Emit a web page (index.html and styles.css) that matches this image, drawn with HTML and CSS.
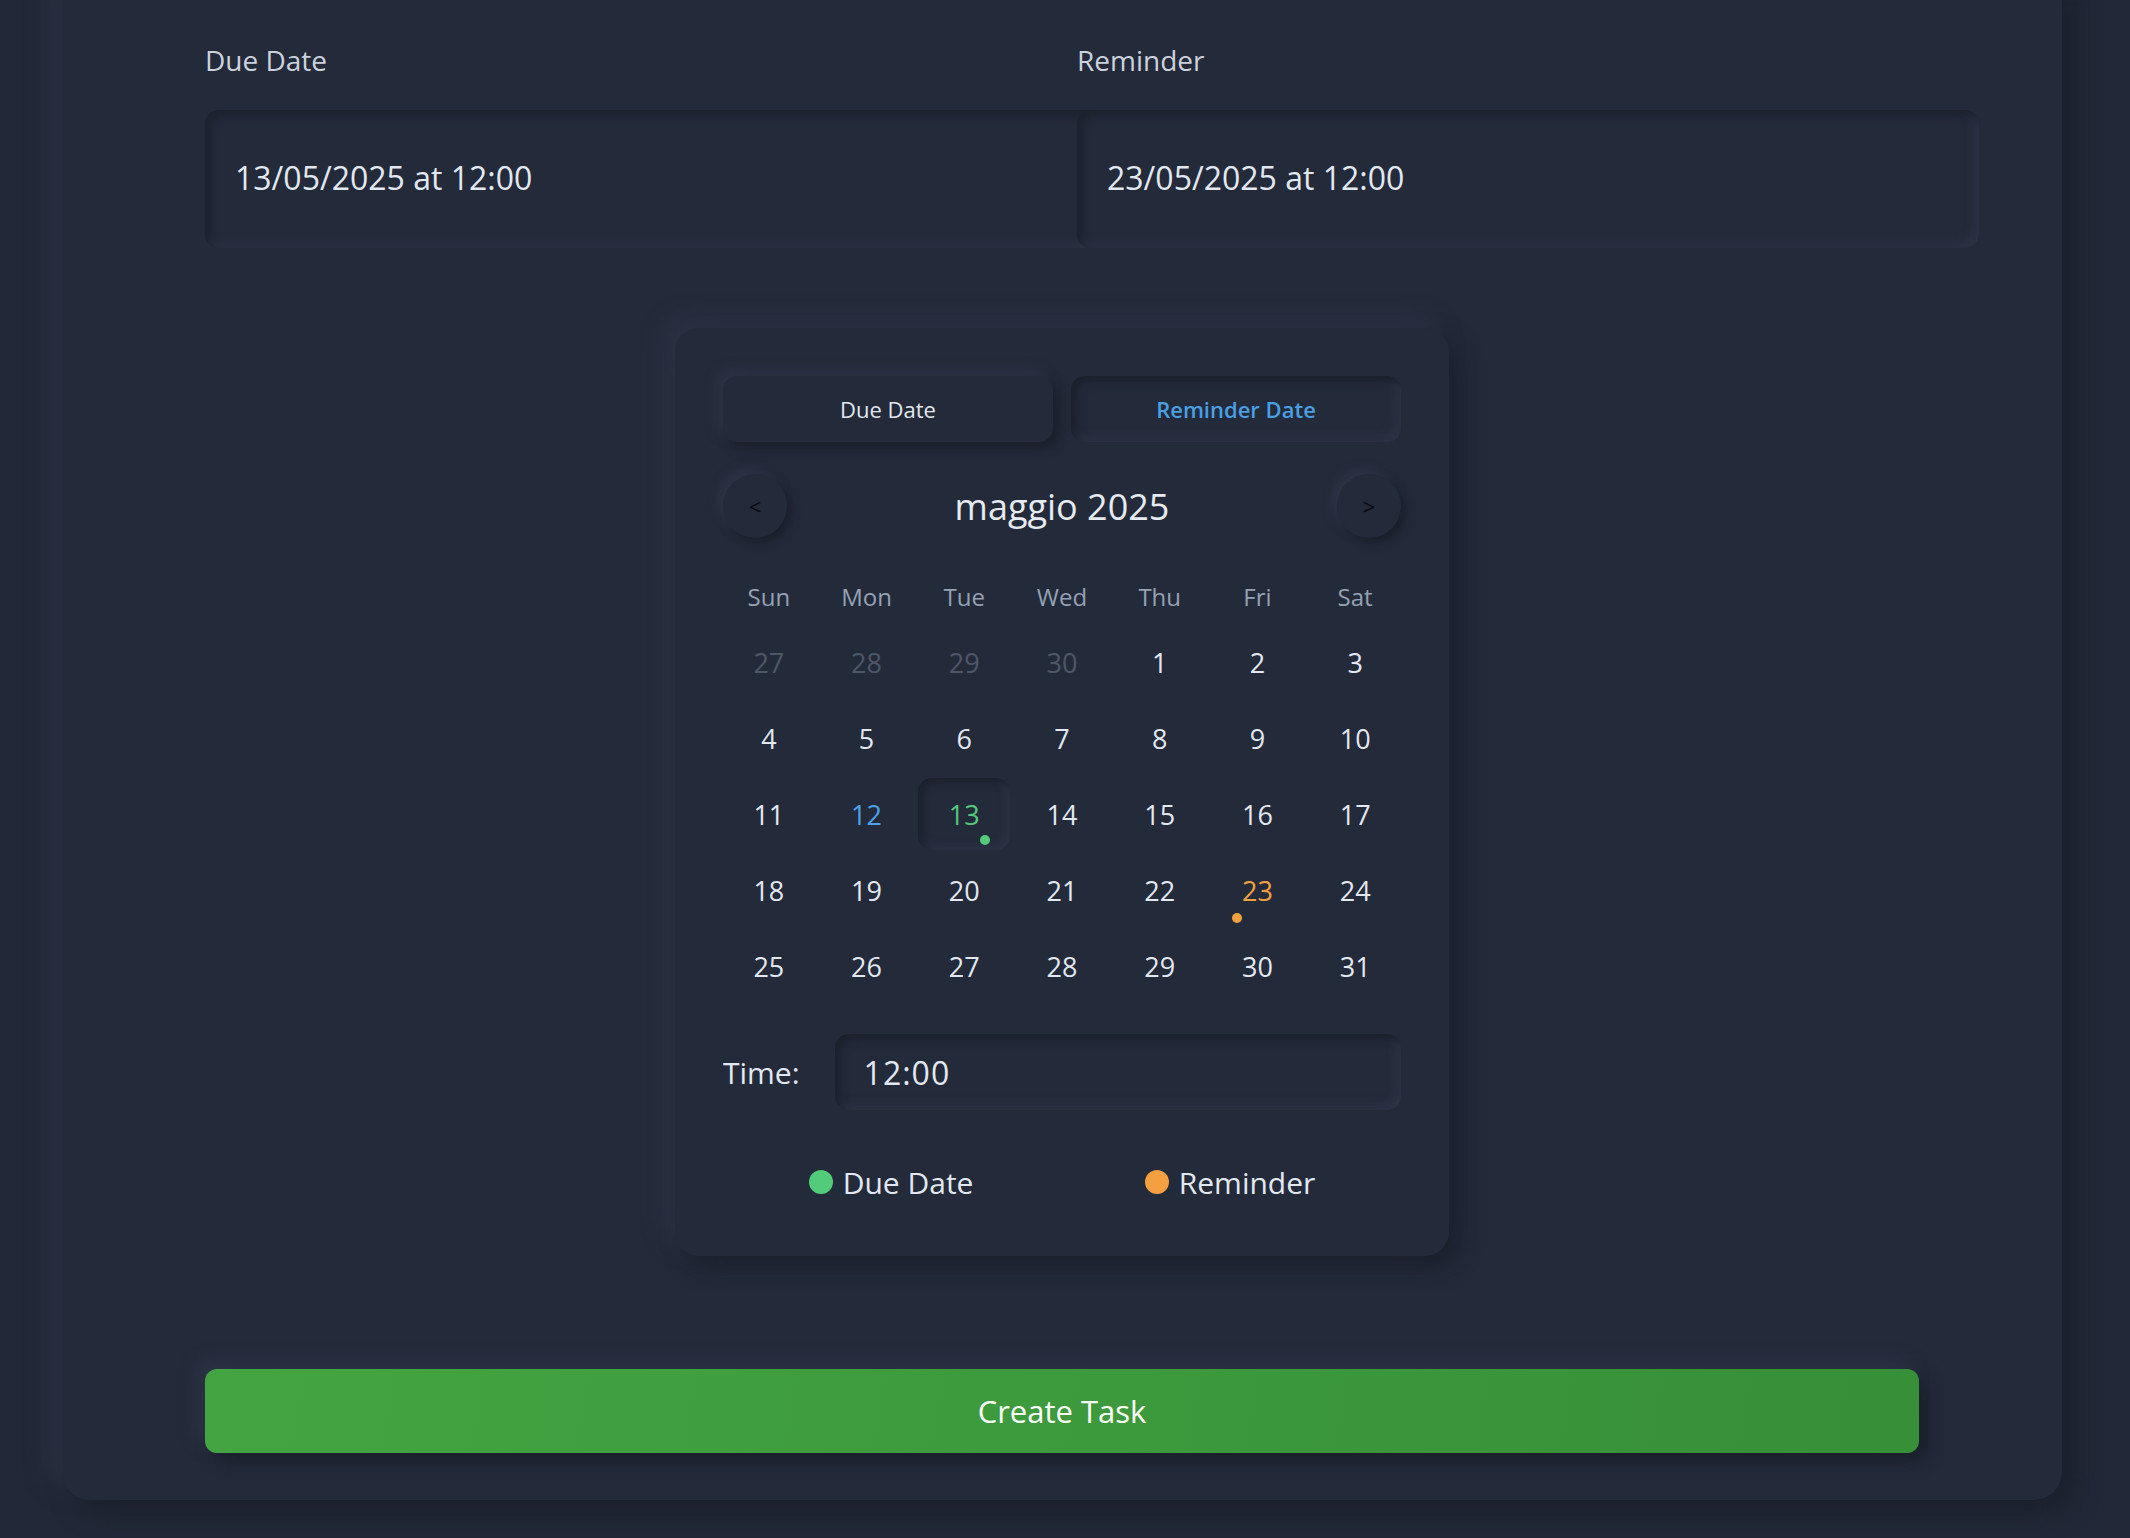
FILE: index.html
```html
<!DOCTYPE html>
<html lang="en">
<head>
<meta charset="utf-8">
<title>Create Task</title>
<link rel="stylesheet" href="styles.css">
</head>
<body>
<div class="panel">
  <div class="fields">
    <div class="field">
      <div class="field-label">Due Date</div>
      <div class="field-value">13/05/2025 at 12:00</div>
    </div>
    <div class="field">
      <div class="field-label">Reminder</div>
      <div class="field-value">23/05/2025 at 12:00</div>
    </div>
  </div>

  <div class="card">
    <div class="tabs">
      <div class="tab tab-raised">Due Date</div>
      <div class="tab tab-active">Reminder Date</div>
    </div>

    <div class="nav">
      <div class="nav-btn">&lt;</div>
      <div class="month">maggio 2025</div>
      <div class="nav-btn">&gt;</div>
    </div>

    <div class="days">
      <div class="wd">Sun</div><div class="wd">Mon</div><div class="wd">Tue</div><div class="wd">Wed</div><div class="wd">Thu</div><div class="wd">Fri</div><div class="wd">Sat</div>

      <div class="day out">27</div><div class="day out">28</div><div class="day out">29</div><div class="day out">30</div><div class="day">1</div><div class="day">2</div><div class="day">3</div>
      <div class="day">4</div><div class="day">5</div><div class="day">6</div><div class="day">7</div><div class="day">8</div><div class="day">9</div><div class="day">10</div>
      <div class="day">11</div><div class="day today">12</div><div class="day due">13<span class="dot dot-due"></span></div><div class="day">14</div><div class="day">15</div><div class="day">16</div><div class="day">17</div>
      <div class="day">18</div><div class="day">19</div><div class="day">20</div><div class="day">21</div><div class="day">22</div><div class="day reminder">23<span class="dot dot-rem"></span></div><div class="day">24</div>
      <div class="day">25</div><div class="day">26</div><div class="day">27</div><div class="day">28</div><div class="day">29</div><div class="day">30</div><div class="day">31</div>
    </div>

    <div class="time-row">
      <div class="time-label">Time:</div>
      <div class="time-input">12:00</div>
    </div>

    <div class="legend">
      <div class="legend-item"><span class="legend-dot green"></span>Due Date</div>
      <div class="legend-item"><span class="legend-dot orange"></span>Reminder</div>
    </div>
  </div>

  <div class="create-btn">Create Task</div>
</div>
</body>
</html>
```

FILE: styles.css
```css
html, body {
  margin: 0;
  padding: 0;
}

body {
  background: #222837;
  font-family: "Open Sans", "Noto Sans", sans-serif;
  color: #e2e8f0;
  min-height: 1538px;
  overflow: hidden;
}

.panel {
  width: 2000px;
  box-sizing: border-box;
  margin: -40px 0 0 62px;
  padding: 82px 143px 47px;
  background: #232a3a;
  border-radius: 28px;
  box-shadow: 12px 12px 24px #1b202c, -12px -12px 24px #2c3345;
}

.fields {
  display: grid;
  grid-template-columns: 1fr 1fr;
  column-gap: 30px;
}

.field-label {
  font-size: 28px;
  line-height: 36px;
  color: #cbd2dd;
  margin-bottom: 32px;
}

.field-value {
  width: 100%;
  box-sizing: content-box;
  height: 134px;
  padding: 0 30px 4px;
  display: flex;
  align-items: center;
  font-size: 32px;
  color: #e2e8f0;
  background: #232a3a;
  border-radius: 14px;
  box-shadow: inset 5px 5px 10px #1c212d, inset -5px -5px 10px #2d3447;
}

.card {
  width: 774px;
  box-sizing: border-box;
  margin: 80px auto 0;
  padding: 48px;
  background: #232a3a;
  border-radius: 24px;
  box-shadow: 10px 10px 22px #1a1f2a, -10px -10px 22px #2d3446;
}

.tabs {
  display: grid;
  grid-template-columns: 1fr 1fr;
  column-gap: 18px;
}

.tab {
  height: 66px;
  border-radius: 14px;
  display: flex;
  align-items: center;
  justify-content: center;
  font-size: 22px;
  font-weight: 500;
  background: #232a3a;
}

.tab-raised {
  color: #e2e8f0;
  box-shadow: 6px 6px 12px #1a1f2a, -6px -6px 12px #2e3548;
}

.tab-active {
  color: #4a9fe3;
  font-weight: 600;
  box-shadow: inset 5px 5px 10px #1b202c, inset -5px -5px 10px #2e3548;
}

.nav {
  margin-top: 32px;
  height: 64px;
  display: flex;
  align-items: center;
  justify-content: space-between;
}

.nav-btn {
  width: 64px;
  height: 64px;
  border-radius: 50%;
  display: flex;
  align-items: center;
  justify-content: center;
  font-size: 22px;
  color: #07090d;
  background: #232a3a;
  box-shadow: 5px 5px 10px #1a1f2a, -5px -5px 10px #2e3548;
}

.month {
  font-size: 36px;
  font-weight: 500;
  color: #e6ebf2;
}

.days {
  margin-top: 32px;
  display: grid;
  grid-template-columns: repeat(7, 1fr);
  grid-template-rows: 52px repeat(5, 72px);
  gap: 4px 6px;
}

.wd {
  display: flex;
  align-items: center;
  justify-content: center;
  font-size: 24px;
  color: #95a1b4;
}

.day {
  position: relative;
  display: flex;
  align-items: center;
  justify-content: center;
  font-size: 27px;
  color: #e2e8f0;
  border-radius: 14px;
}

.day.out {
  color: #4e5768;
}

.day.today {
  color: #4aa3e8;
}

.day.due {
  color: #52c878;
  box-shadow: inset 4px 4px 8px #1b202b, inset -4px -4px 8px #2e3548;
}

.day.reminder {
  color: #f4a040;
}

.dot {
  position: absolute;
  bottom: 5px;
  width: 10px;
  height: 10px;
  border-radius: 50%;
}

.dot-due {
  right: 20px;
  background: #52cc7a;
}

.dot-rem {
  left: 20px;
  bottom: 3px;
  background: #f4a040;
}

.time-row {
  margin-top: 32px;
  display: flex;
  align-items: center;
  gap: 35px;
}

.time-label {
  font-size: 30px;
  color: #e2e8f0;
}

.time-input {
  flex: 1;
  height: 76px;
  padding: 0 29px;
  display: flex;
  align-items: center;
  font-size: 32px;
  letter-spacing: 1px;
  color: #e2e8f0;
  border-radius: 14px;
  box-shadow: inset 5px 5px 10px #1b202c, inset -5px -5px 10px #2e3548;
}

.legend {
  margin-top: 50px;
  height: 44px;
  padding-bottom: 4px;
  display: flex;
  align-items: center;
  justify-content: space-around;
}

.legend-item {
  display: flex;
  align-items: center;
  gap: 10px;
  font-size: 30px;
  color: #e2e8f0;
}

.legend-dot {
  width: 24px;
  height: 24px;
  border-radius: 50%;
}

.legend-dot.green {
  background: #52cc7a;
}

.legend-dot.orange {
  background: #f4a040;
}

.create-btn {
  margin-top: 113px;
  height: 84px;
  border-radius: 12px;
  display: flex;
  align-items: center;
  justify-content: center;
  font-size: 31px;
  font-weight: 500;
  color: #ffffff;
  background: linear-gradient(100deg, #43a541 0%, #378f38 100%);
  box-shadow: 8px 8px 16px #1a1f2a, -8px -8px 16px #2e3548;
}
```
